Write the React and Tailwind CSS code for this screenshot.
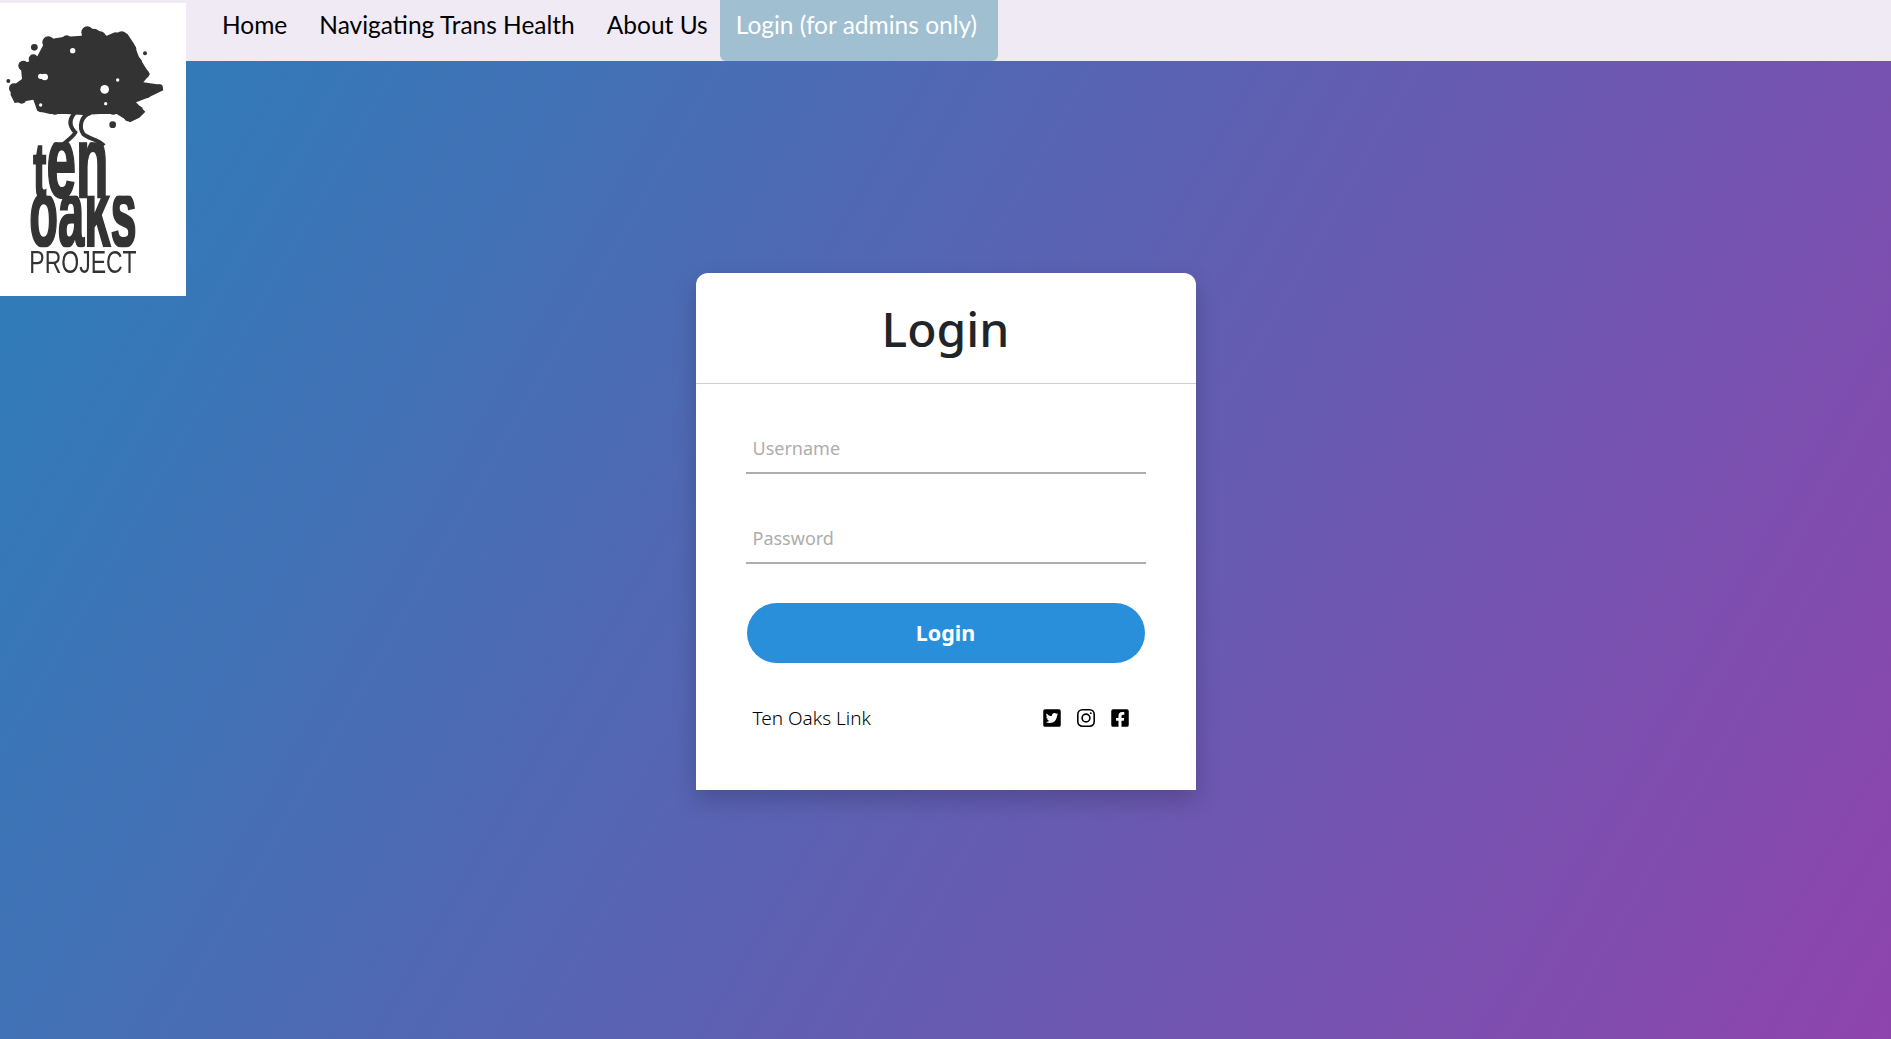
import { FaTwitterSquare, FaFacebookSquare } from 'react-icons/fa'

const navLinks = ['Home', 'Navigating Trans Health', 'About Us']

// lobes along the edge of the tree crown: x, y, radius
const crownLobes = [
  [42, 268, 15], [70, 200, 15], [100, 180, 14], [120, 300, 16], [145, 130, 18], [200, 125, 16], [262, 100, 18],
  [300, 115, 18], [365, 115, 18], [395, 150, 14], [412, 190, 14], [435, 225, 12], [478, 266, 10], [440, 285, 12],
  [415, 335, 14], [385, 355, 12], [340, 335, 12], [280, 335, 10], [220, 335, 12], [165, 335, 12], [125, 328, 12],
  [65, 300, 14],
]

const crownDots = [
  [103, 145, 10], [435, 163, 6], [25, 246, 6], [338, 377, 10],
]

const crownHoles = [
  [218, 155, 8], [122, 232, 8], [134, 234, 10], [314, 271, 13], [353, 243, 5], [317, 314, 5], [122, 318, 5],
]

function Logo() {
  return (
    <div className="absolute left-0 top-[3px] h-[293px] w-[186px] bg-white">
      <svg viewBox="0 12 558 879" className="h-full w-full" fill="#333333">
        <defs>
          <clipPath id="ten-clip">
            <rect x="80" y="430" width="280" height="170" />
          </clipPath>
          <clipPath id="oaks-clip">
            <rect x="70" y="590" width="360" height="155" />
          </clipPath>
        </defs>
        <g style={{ filter: 'blur(0.8px)' }}>
          <path d="M32 265 L66 240 L62 196 L90 186 L112 172 L138 122 L190 114 L245 110 L252 88 L288 90 L320 110 L345 100 L382 104 L402 134 L416 172 L436 205 L450 226 L430 250 L486 258 L490 274 L440 298 L408 310 L436 338 L418 356 L390 370 L350 345 L300 345 L250 348 L200 345 L150 345 L112 336 L100 302 L44 312 L32 288 Z" />
          {crownLobes.map(([cx, cy, r]) => (
            <circle key={`${cx}-${cy}`} cx={cx} cy={cy} r={r} />
          ))}
          {crownDots.map(([cx, cy, r]) => (
            <circle key={`${cx}-${cy}`} cx={cx} cy={cy} r={r} />
          ))}
          {crownHoles.map(([cx, cy, r]) => (
            <circle key={`${cx}-${cy}`} cx={cx} cy={cy} r={r} fill="#ffffff" />
          ))}
          <path
            fill="none"
            stroke="#333333"
            strokeWidth="12"
            d="M226 340 C205 362 208 382 226 400 C220 412 205 422 190 436 M272 342 C242 350 236 385 250 405 C265 420 295 420 312 440"
          />
          <g stroke="#333333" strokeWidth="7">
            <text clipPath="url(#ten-clip)" x="100" y="595" fontSize="318" fontWeight="700" fontFamily="'Liberation Sans', sans-serif" textLength="225" lengthAdjust="spacingAndGlyphs">
              <tspan fontSize="235">t</tspan>en
            </text>
            <text clipPath="url(#oaks-clip)" x="88" y="740" fontSize="289" fontWeight="700" fontFamily="'Liberation Sans', sans-serif" textLength="322" lengthAdjust="spacingAndGlyphs">
              oaks
            </text>
          </g>
          <text x="88" y="822" fontSize="93" fontFamily="'Liberation Sans', sans-serif" textLength="322" lengthAdjust="spacingAndGlyphs">
            PROJECT
          </text>
        </g>
      </svg>
    </div>
  )
}

function InstagramIcon() {
  return (
    <svg viewBox="0 0 20 20" className="h-[20px] w-[20px]" fill="none" stroke="currentColor" strokeWidth="1.6">
      <rect x="1.8" y="1.8" width="16.4" height="16.4" rx="4.6" />
      <circle cx="10" cy="10" r="3.9" />
      <circle cx="14.8" cy="5.2" r="0.9" fill="currentColor" stroke="none" />
    </svg>
  )
}

function Navbar() {
  return (
    <nav className="relative flex h-[61px] items-stretch bg-[#f0eaf5] pl-[206px] font-['Lato',sans-serif] text-[24.5px] text-black">
      <Logo />
      {navLinks.map((link) => (
        <a key={link} href="#" className="flex items-center px-4 pb-[10px]">
          {link}
        </a>
      ))}
      <a href="#" className="-ml-[4px] flex items-center rounded-b-md bg-[#a0c0d2] pb-[10px] pl-4 pr-[21px] text-white">
        Login (for admins only)
      </a>
    </nav>
  )
}

function LoginCard() {
  return (
    <div className="mx-auto w-[500px] rounded-t-xl bg-white pb-[57px] font-['Noto_Sans',sans-serif] shadow-[0_10px_25px_rgba(0,0,0,0.2)]">
      <h1 className="flex h-[111px] items-center justify-center border-b border-[#cfcfcf] pt-[2px] text-[48px] font-medium text-[#212529]">
        Login
      </h1>
      <form className="px-[50px] pt-[48px]">
        <input
          type="text"
          placeholder="Username"
          className="mb-[48px] block h-[42px] w-full border-b-2 border-[#adadad] px-[7px] pb-[8px] text-[18px] outline-none placeholder:text-[#adadad]"
        />
        <input
          type="password"
          placeholder="Password"
          className="block h-[42px] w-full border-b-2 border-[#adadad] px-[7px] pb-[8px] text-[18px] outline-none placeholder:text-[#adadad]"
        />
        <div className="px-px">
          <button type="button" className="mt-[39px] block h-[60px] w-full rounded-[30px] bg-[#2a8fdb] text-[21.5px] font-bold text-white">
            Login
          </button>
        </div>
        <div className="mt-[41px] flex items-center justify-between pl-[7px] pr-[16px] text-[19px] font-light text-black">
          <a href="#">Ten Oaks Link</a>
          <div className="flex items-center gap-[14px] text-[20px]">
            <FaTwitterSquare />
            <InstagramIcon />
            <FaFacebookSquare />
          </div>
        </div>
      </form>
    </div>
  )
}

export default function App() {
  return (
    <div className="h-[1039px] overflow-hidden bg-[linear-gradient(120deg,#2980b9,#8e44ad)]">
      <Navbar />
      <main className="pt-[212px]">
        <LoginCard />
      </main>
    </div>
  )
}
